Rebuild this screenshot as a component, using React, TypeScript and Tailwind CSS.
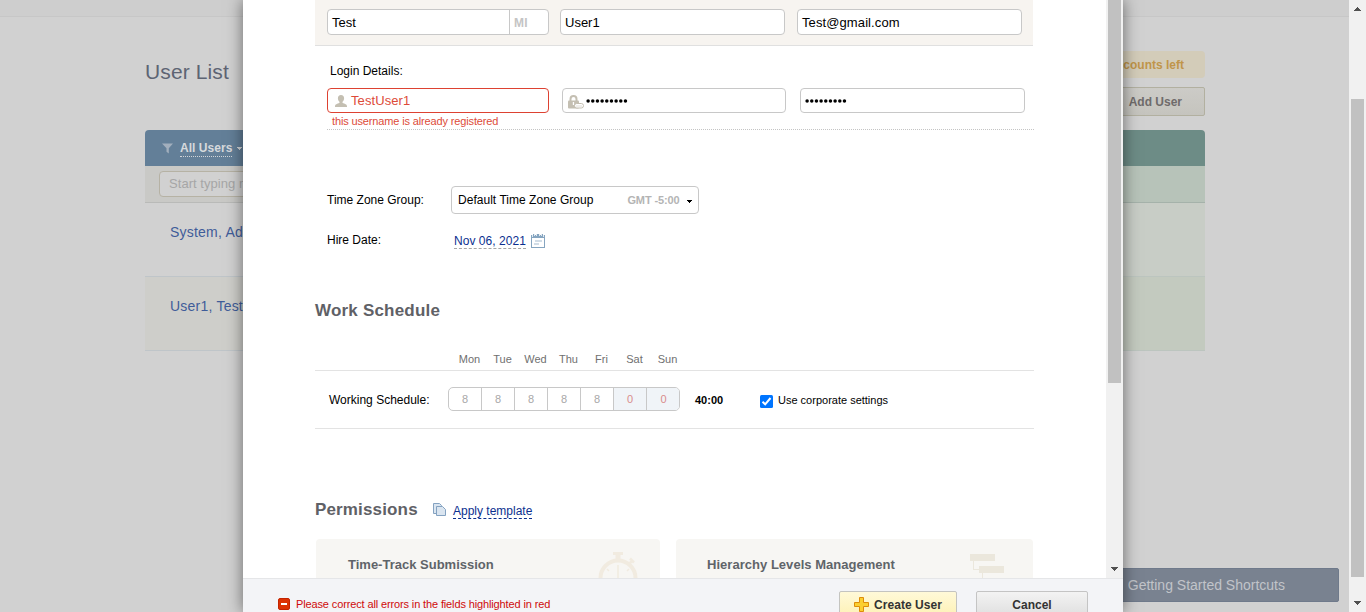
import React from "react";

const days = ["Mon", "Tue", "Wed", "Thu", "Fri", "Sat", "Sun"];
const hours = [8, 8, 8, 8, 8, 0, 0];

function Arrow({ up = false }: { up?: boolean }) {
  return (
    <svg width="7" height="4" viewBox="0 0 7 4" shapeRendering="crispEdges" className="block">
      <path d={up ? "M3 0h1v1h1v1h1v1h1v1H0V3h1V2h1V1h1z" : "M0 0h7v1H6v1H5v1H4v1H3V3H2V2H1V1H0z"} fill="#505050" />
    </svg>
  );
}

function Caret({ color }: { color: string }) {
  return (
    <svg width="5" height="3" viewBox="0 0 5 3" shapeRendering="crispEdges" className="block">
      <path d="M0 0h5v1H4v1H3v1H2V2H1V1H0z" fill={color} />
    </svg>
  );
}

function BackgroundPage() {
  return (
    <div className="flex h-[612px] w-[1349px] flex-col bg-[#d1d1d1]">
      <div className="h-[17px] shrink-0 border-b border-[#c7c7c7] bg-[#cecece]" />
      <div className="ml-[145px] flex h-[113px] w-[1060px] shrink-0 justify-between">
        <h1 className="pt-[43px] text-[21px] leading-6 tracking-[0.12px] text-[#5d6473]">User List</h1>
        <div className="flex flex-col items-end pt-[34px]">
          <div className="flex h-[27px] w-[140px] items-center justify-end rounded bg-[#d3ccb9] pr-[21px] text-xs font-bold text-[#c0954a]">
            <span>Accounts left</span>
          </div>
          <button className="mt-[9px] flex h-[29px] w-[120px] items-center justify-end rounded-xs border border-[#b2b0a0] bg-gradient-to-b from-[#cccbc7] to-[#c5c4be] pr-[22px] text-xs font-bold text-[#6f6b6b]">
            Add User
          </button>
        </div>
      </div>
      <div className="ml-[145px] flex w-[1060px] shrink-0">
        <div className="w-[530px]">
          <div className="flex h-9 items-center rounded-tl bg-[#637f98] pl-[17px]">
            <svg width="11" height="11" viewBox="0 0 11 11" className="mt-px">
              <path d="M0 .5h11L6.800 5.300V10.500L4.500 8.800V5.300z" fill="#a2afbd" />
            </svg>
            <span className="ml-[7px] border-b border-dotted border-[#d2d5d8] text-[12px] leading-[16px] font-bold tracking-[0.05px] text-[#d6d9dc]">All Users</span>
            <span className="mt-px ml-[5px]"><Caret color="#d2d5d8" /></span>
          </div>
          <div className="flex h-[37px] items-center border-b border-[#b9bab8] bg-[#c9c9c6] pl-3.5">
            <div className="h-[26px] w-[220px] rounded border border-[#b6b2a4] bg-[#d1d1d1] pl-[9px] text-[13px] leading-6 tracking-[0.05px] text-[#a6a6a6]">Start typing name</div>
          </div>
          <div className="h-[74px] border-b border-[#bfc5c9] pt-[18px] pl-[25px] text-sm leading-[22px] tracking-[0.22px] text-[#3f5c99]">System, Ad</div>
          <div className="h-[74px] border-b border-[#bfc5c9] bg-[#cececa] pt-[18px] pl-[25px] text-sm leading-[22px] tracking-[0.22px] text-[#3f5c99]">User1, Test</div>
        </div>
        <div className="w-[530px]">
          <div className="h-9 rounded-tr bg-[#6d8c86]" />
          <div className="h-[37px] border-b border-[#a5b2aa] bg-[#b7c3b9]" />
          <div className="h-[74px] border-b border-[#bcc5bf] bg-[#c8cdc6]" />
          <div className="h-[74px] border-b border-[#bcc5bf] bg-[#c3cabf]" />
        </div>
      </div>
      <div className="mt-auto mr-2.5 mb-2.5 ml-auto flex h-[34px] w-[260px] items-center justify-end rounded-xs border border-[#6f7a8b] bg-[#798290] pr-[53px] text-sm text-[#c1c4c9]">
        Getting Started Shortcuts
      </div>
    </div>
  );
}

function UserIcon() {
  return (
    <svg width="12" height="12" viewBox="0 0 12 12" className="shrink-0">
      <path d="M6 0C4 0 2.800 1.400 2.900 3.400 3 5 3.700 6 4.500 6.700v1.100C3.900 8.600.3 8.700 0 11v1h12v-1c-.3-2.300-3.900-2.400-4.500-3.200V6.700C8.300 6 9 5 9.100 3.400 9.200 1.400 8 0 6 0z" fill="#c4bfb2" />
    </svg>
  );
}

function LockIcon() {
  return (
    <svg width="16" height="14" viewBox="0 0 16 14" className="mt-0.5 shrink-0">
      <path d="M2.500 6V4a3 3 0 0 1 6 0v2" fill="none" stroke="#c4bfb2" strokeWidth="2" />
      <rect x="0" y="5.500" width="11" height="8" rx="1" fill="#c4bfb2" />
      <rect x="4.800" y="7" width="1.300" height="3" fill="#fff" />
      <rect x="6.500" y="8.500" width="9" height="4.500" rx="2.200" fill="#fff" stroke="#c4bfb2" />
      <path d="M8.500 11h1M10.500 11h1M12.500 11h1" stroke="#c4bfb2" />
    </svg>
  );
}

function PasswordDots() {
  return (
    <svg width="43" height="4" viewBox="0 0 43 4" className="block">
      {Array.from({ length: 9 }, (_, i) => (
        <circle key={i} cx={2.1 + i * 4.67} cy="2" r="1.75" fill="#000" />
      ))}
    </svg>
  );
}

function Stopwatch() {
  return (
    <svg width="40" height="26" viewBox="0 0 40 26" className="block">
      <g fill="none" stroke="#f1ebe0">
        <circle cx="20" cy="26" r="17.500" strokeWidth="4" />
        <path d="M20 3v6" strokeWidth="5" />
        <path d="M15 1.500h10" strokeWidth="3" />
        <path d="M31 12l3-3M32 6.500l4 4" strokeWidth="2.500" />
        <path d="M20 13v13M9 17l2 2M31 17l-2 2" strokeWidth="1.500" />
      </g>
    </svg>
  );
}

function ModalBody() {
  return (
    <div className="h-[578px] w-[863px] overflow-hidden bg-white pl-[72px] text-xs text-black">
      <div className="flex h-[46px] w-[718px] border-b border-[#e0e0e0] bg-[#f7f4f0] pt-[9px] pl-3 text-[13px] leading-[26px]">
        <div className="flex h-[26px] w-[222px] rounded border border-[#c8c8c8] bg-white">
          <div className="w-[182px] border-r border-[#c8c8c8] pl-1">Test</div>
          <div className="pl-1 text-[12px] font-bold tracking-[0.3px] text-[#c4c4c4]">MI</div>
        </div>
        <div className="ml-[11px] h-[26px] w-[225px] rounded border border-[#c8c8c8] bg-white pl-1">User1</div>
        <div className="ml-3 h-[26px] w-[225px] rounded border border-[#c8c8c8] bg-white pl-1 tracking-[0.1px]">Test@gmail.com</div>
      </div>

      <div className="ml-3 h-[84px] w-[707px] border-b border-dotted border-[#c4c4c4] pt-[17px]">
        <div className="h-[25px] pl-[3px] leading-4">Login Details:</div>
        <div className="flex">
          <div className="flex h-[25px] w-[222px] items-center rounded border border-[#dd4232] pl-[7px] text-[13px] text-[#dd4b39]">
            <UserIcon />
            <span className="ml-1 tracking-[0.08px]">TestUser1</span>
          </div>
          <div className="ml-[13px] flex h-[25px] w-[224px] items-center rounded border border-[#c8c8c8] pl-[5px]">
            <LockIcon />
            <span className="ml-[2px]"><PasswordDots /></span>
          </div>
          <div className="ml-3.5 flex h-[25px] w-[225px] items-center rounded border border-[#c8c8c8] pl-1">
            <PasswordDots />
          </div>
        </div>
        <div className="pl-[5px] text-[11px] leading-4 tracking-[-0.14px] text-[#dd4b39]">this username is already registered</div>
      </div>

      <div className="mt-14 ml-3 flex h-7 items-center">
        <div className="w-[124px]">Time Zone Group:</div>
        <div className="flex h-7 w-[248px] items-center rounded border border-[#c8c8c8] pl-1.5">
          <span className="tracking-[0.03px]">Default Time Zone Group</span>
          <span className="ml-[34px] text-[11px] font-bold tracking-[-0.12px] text-[#b4b4b4]">GMT -5:00</span>
          <span className="mt-0.5 ml-[7px]"><Caret color="#000" /></span>
        </div>
      </div>
      <div className="mt-[18px] ml-3 flex h-4 leading-4">
        <div className="w-[127px]">Hire Date:</div>
        <span className="mt-px h-4 border-b border-dashed border-[#a6a6a6] tracking-[0.05px] text-[#0b2f8f]">Nov 06, 2021</span>
        <svg width="14" height="14" viewBox="0 0 14 14" shapeRendering="crispEdges" className="mt-0.5 ml-[5px]">
          <path d="M0 1h14v13H0z" fill="#86a5c0" />
          <path d="M1 4h12v9H1z" fill="#fff" />
          <path d="M2 0h1v3H2zM6 0h2v2H6zM11 0h1v3h-1z" fill="#86a5c0" />
          <path d="M1 1h1v2H1zM3 0h1v2H3zM5 0h1v2H5zM8 0h1v2H8zM10 0h1v2h-1zM12 1h1v2h-1z" fill="#e3ebf2" />
          <path d="M4 6h7v2H4zM3 9h5v2H3z" fill="#d2dde7" />
        </svg>
      </div>

      <h2 className="mt-[53px] text-[17px] leading-5 font-bold tracking-[0.2px] text-[#5f6166]">Work Schedule</h2>
      <div className="mt-[30px] flex h-5 w-[719px] border-b border-[#e3e3e3] pl-[138px] text-[11px] leading-4 text-[#707070]">
        {days.map((d) => (
          <div key={d} className="w-[33px] text-center">{d}</div>
        ))}
      </div>
      <div className="flex h-[58px] w-[719px] items-center border-b border-[#e3e3e3] pl-3.5">
        <div className="w-[119px]">Working Schedule:</div>
        <div className="mb-[2px] flex h-6 w-[232px] overflow-hidden rounded-[5px] border border-[#c8c8c8] text-[11px] leading-[22px]">
          {hours.map((h, i) => (
            <div key={i} className={`w-[33px] shrink-0 text-center ${i < 6 ? "border-r border-[#c8c8c8]" : ""} ${h ? "text-[#a8a8a8]" : "bg-[#f0f4f8] text-[#d98c8c]"}`}>{h}</div>
          ))}
        </div>
        <span className="mt-0.5 ml-[15px] w-[65px] text-[11px] font-bold">40:00</span>
        <svg width="13" height="13" viewBox="0 0 13 13" className="mt-1">
          <rect width="13" height="13" rx="1.500" fill="#0075ff" />
          <path d="M2.500 6.800l2.700 2.500 5.300-6.300" fill="none" stroke="#fff" strokeWidth="2" />
        </svg>
        <span className="mt-0.5 ml-[5px] text-[11px]">Use corporate settings</span>
      </div>

      <div className="mt-[71px] flex h-5">
        <h2 className="w-[118px] text-[17px] leading-5 font-bold tracking-[0.15px] text-[#5f6166]">Permissions</h2>
        <svg width="13" height="13" viewBox="0 0 13 13" className="mt-[3px]" shapeRendering="geometricPrecision">
          <path d="M.5.5h6l2 2v8h-8z" fill="#dae5f0" stroke="#84a2c1" />
          <path d="M3.500 3.500h6l3 3v6h-9z" fill="#dae5f0" stroke="#84a2c1" />
        </svg>
        <span className="mt-[3px] ml-[7px] h-4 border-b border-dashed border-[#0b2f8f] leading-4 text-[#0b2f8f]">Apply template</span>
      </div>
      <div className="mt-[19px] ml-px flex h-[60px] gap-4 text-[13px] font-bold text-[#5f6469]">
        <div className="flex w-[344px] justify-between rounded-t bg-[#f7f6f3] pt-[13px] pr-[22px] pl-8">
          <span className="mt-[5px] leading-4">Time-Track Submission</span>
          <Stopwatch />
        </div>
        <div className="flex w-[357px] justify-between rounded-t bg-[#f7f6f3] pt-[15px] pr-[29px] pl-[31px]">
          <span className="mt-[3px] leading-4 tracking-[0.03px]">Hierarchy Levels Management</span>
          <svg width="34" height="26" viewBox="0 0 34 26" shapeRendering="crispEdges">
            <path d="M0 0h25v7H0zM9 12h25v7H9zM3 7h1v8h5v1H3zM12 19h1v7h-1z" fill="#ebe7dc" />
          </svg>
        </div>
      </div>
    </div>
  );
}

function Modal() {
  return (
    <div className="absolute top-0 left-[243px] h-[612px] w-[880px] bg-white shadow-[0_0_15px_rgba(0,0,0,0.5)]">
      <div className="flex h-[578px]">
        <ModalBody />
        <div className="flex w-[17px] flex-col items-center bg-[#f1f1f1]">
          <div className="h-[383px] w-[13px] bg-[#c1c1c1]" />
          <div className="mt-auto mb-[7px]"><Arrow /></div>
        </div>
      </div>
      <div className="flex h-[34px] overflow-hidden border-t border-[#e5e6e8] bg-[#f3f4f7] pl-[35px]">
        <svg width="12" height="12" viewBox="0 0 12 12" className="mt-[19px] shrink-0">
          <rect x=".5" y=".5" width="11" height="11" rx="1.500" fill="#dc3203" stroke="#c32400" />
          <rect x="3" y="5" width="6" height="2" fill="#fff" />
        </svg>
        <span className="mt-[17px] ml-1.5 w-[543px] text-[11px] leading-4 tracking-[-0.13px] text-[#cf0a0a]">Please correct all errors in the fields highlighted in red</span>
        <button className="mt-3 flex h-[30px] w-[118px] shrink-0 rounded-xs border border-[#c4c4c0] bg-gradient-to-b from-[#fff9d8] to-[#fdf0b0] pl-3.5 text-xs font-bold text-[#333]">
          <svg width="15" height="15" viewBox="0 0 15 15" className="mt-[5px]">
            <path d="M5.500.5h4v5h5v4h-5v5h-4v-5h-5v-4h5z" fill="#fbcf30" stroke="#dd8d09" />
          </svg>
          <span className="mt-[5px] ml-[5px] leading-4 tracking-[0.05px]">Create User</span>
        </button>
        <button className="mt-3 ml-[19px] h-[30px] w-[112px] shrink-0 rounded-xs border border-[#c4c4c4] bg-gradient-to-b from-[#f3f3f3] to-[#dcdcdc] pt-[5px] text-xs leading-4 font-bold text-[#333]">
          <span className="block h-6">Cancel</span>
        </button>
      </div>
    </div>
  );
}

export default function App() {
  return (
    <div className="relative flex h-[612px] w-[1366px] overflow-hidden font-['Liberation_Sans',Arial,sans-serif] whitespace-nowrap">
      <BackgroundPage />
      <div className="flex w-[17px] flex-col items-center bg-[#f1f1f1] pt-[7px]">
        <Arrow up />
        <div className="mt-[88px] h-[478px] w-[13px] bg-[#c1c1c1]" />
        <div className="mt-6"><Arrow /></div>
      </div>
      <Modal />
    </div>
  );
}
